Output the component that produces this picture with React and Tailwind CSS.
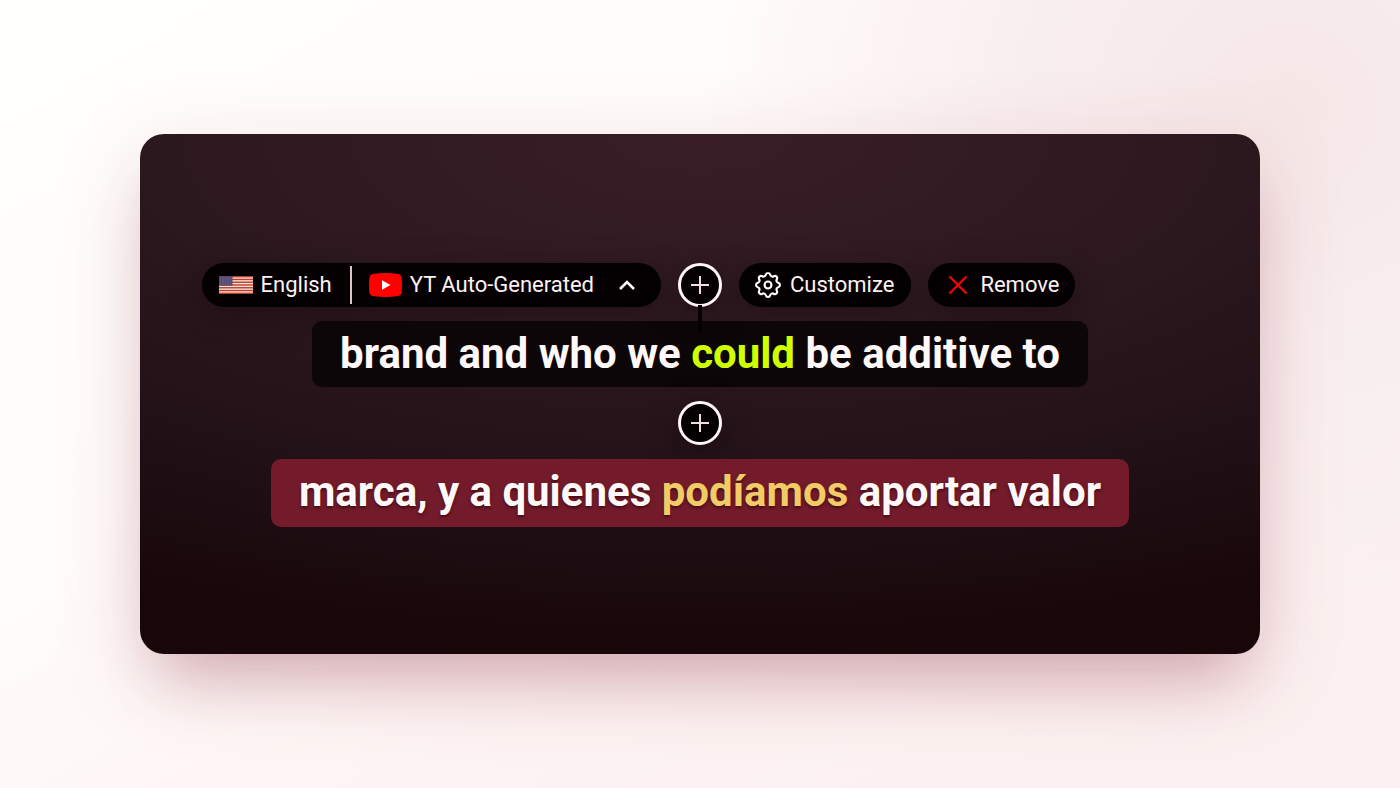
const pill = "flex h-11 items-center rounded-full bg-[#040002] text-[22px] leading-[30px] text-[#fdf1f3] shadow-[0_8px_32px_rgba(10,0,4,0.3)]";
const caption = "rounded-[10px] px-7 text-[42px] leading-[66px] font-bold text-[#fff8f8]";

function Flag() {
  return (
    <svg width="34" height="18" viewBox="0 0 34 18" aria-hidden="true">
      <rect width="34" height="18" fill="#f0e2d6" />
      {[0, 1, 2, 3, 4, 5, 6].map((n) => (
        <rect key={n} x="0" y={(n * 36) / 13} width="34" height={18 / 13} fill="#bf3b28" />
      ))}
      <rect width="13.5" height="9.7" fill="#54476f" />
      {[1.5, 3.5, 5.5, 7.5].map((y, r) =>
        [1.5, 4, 6.5, 9, 11.5].map((x) => (
          <rect key={x + "-" + y} x={r % 2 ? x - 0.7 : x} y={y} width="1" height="0.8" fill="#9488a4" />
        ))
      )}
    </svg>
  );
}

function PlayLogo() {
  return (
    <svg width="33" height="24" viewBox="0 0 33 24" aria-hidden="true">
      <path d="M5 .7C12 -.1 21 -.1 28 .7C31.500 1.200 32.400 2.600 32.700 5.500C33.100 10 33.100 14 32.700 18.500C32.400 21.400 31.500 22.800 28 23.300C21 24.100 12 24.100 5 23.300C1.500 22.800 .6 21.400 .3 18.500C-.1 14 -.1 10 .3 5.500C.6 2.600 1.500 1.200 5 .7Z" fill="#ff0000" />
      <path d="M13 7.300L21.500 12L13 16.700Z" fill="#fff" />
    </svg>
  );
}

function Gear() {
  return (
    <svg width="26" height="26" viewBox="2.2 2.2 19.6 19.6" fill="none" stroke="#fff" strokeWidth="1.6" strokeLinejoin="round" aria-hidden="true">
      <path d="M10.325 4.317c.426-1.756 2.924-1.756 3.350 0a1.724 1.724 0 002.573 1.066c1.543-.94 3.310.826 2.370 2.370a1.724 1.724 0 001.065 2.572c1.756.426 1.756 2.924 0 3.350a1.724 1.724 0 00-1.066 2.573c.94 1.543-.826 3.310-2.370 2.370a1.724 1.724 0 00-2.572 1.065c-.426 1.756-2.924 1.756-3.350 0a1.724 1.724 0 00-2.573-1.066c-1.543.94-3.310-.826-2.370-2.370a1.724 1.724 0 00-1.065-2.572c-1.756-.426-1.756-2.924 0-3.350a1.724 1.724 0 001.066-2.573c-.94-1.543.826-3.310 2.370-2.370.996.608 2.296.07 2.572-1.065z" />
      <circle cx="12" cy="12" r="2.6" />
    </svg>
  );
}

function AddButton({ label }) {
  return (
    <button
      type="button"
      aria-label={label}
      className="flex size-11 items-center justify-center rounded-full border-3 border-[#fff5f6] bg-[#040002] shadow-[0_8px_32px_rgba(10,0,4,0.4)]"
    >
      <svg width="18" height="18" viewBox="0 0 18 18" fill="none" stroke="#f3dde1" strokeWidth="2" aria-hidden="true">
        <path d="M9 0V18M0 9H18" />
      </svg>
    </button>
  );
}

export default function App() {
  return (
    <main className="flex min-h-screen items-center justify-center bg-[radial-gradient(ellipse_42%_70%_at_92%_14%,#f6e7e7_0%,#f9eeee_45%,transparent_100%),linear-gradient(150deg,#fffffd_0%,#fffcfa_38%,#fdf3f2_65%,#fbefef_100%)] font-[Roboto,sans-serif]">
      <section className="flex w-4/5 flex-col items-center gap-3.5 rounded-3xl bg-[radial-gradient(ellipse_110%_98%_at_50%_0%,#391e27_0%,#2e1920_38%,#1f0f14_78%,#180609_100%)] pt-[129px] pb-[127px] shadow-[0_40px_60px_-20px_rgba(120,20,45,0.24),0_24px_90px_rgba(140,30,55,0.16)]">
        <div className="grid w-full grid-cols-[1fr_auto_1fr] gap-[17px]">
          <div className={pill + " justify-self-end"}>
            <button type="button" className="flex items-center gap-2 pr-[18px] pl-[17px]">
              <Flag />
              English
            </button>
            <span className="h-[38px] w-0.5 bg-[#d8c6ca]" />
            <button type="button" className="flex items-center pr-[26px] pl-[17px]">
              <PlayLogo />
              <span className="pr-[25px] pl-2">YT Auto-Generated</span>
              <svg width="16" height="10" viewBox="0 0 16 10" fill="none" stroke="#fff" strokeWidth="2.6" aria-hidden="true">
                <path d="M1 9L8 2L15 9" />
              </svg>
            </button>
          </div>
          <div className="relative">
            <AddButton label="Add subtitle above" />
            <span className="absolute top-[42px] left-5 z-10 h-7 w-1 bg-[#040002]" />
          </div>
          <div className="flex gap-[17px]">
            <button type="button" className={pill + " gap-[9px] pr-[17px] pl-4"}>
              <Gear />
              Customize
            </button>
            <button type="button" className={pill + " gap-3 pr-4 pl-5"}>
              <svg width="20" height="20" viewBox="0 0 20 20" fill="none" stroke="#ff0000" strokeWidth="2.2" aria-hidden="true">
                <path d="M1.500 1.500L18.500 18.500M18.500 1.500L1.500 18.500" />
              </svg>
              Remove
            </button>
          </div>
        </div>
        <p className={caption + " bg-[#0d0608]"}>
          brand and who we <span className="text-[#d0ff00]">could</span> be additive to
        </p>
        <AddButton label="Add subtitle between" />
        <p className={caption + " bg-[#731b2a] pb-0.5 [text-shadow:0_2px_3px_rgba(40,0,10,0.6)]"}>
          marca, y a quienes <span className="text-[#f1cc66]">podíamos</span> aportar valor
        </p>
      </section>
    </main>
  );
}
